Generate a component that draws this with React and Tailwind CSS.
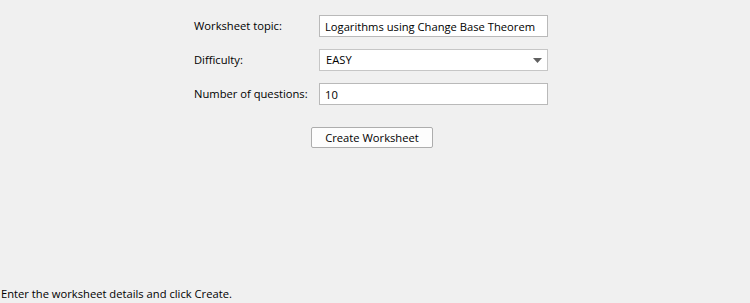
import { useState } from 'react';

const App = () => {
    const [topic, setTopic] = useState('Logarithms using Change Base Theorem');
    const [difficulty] = useState('EASY');
    const [count, setCount] = useState('10');

    return (
        <div className="h-screen w-full bg-[#f0f0f0] text-[11.2px] text-black flex flex-col font-['Open_Sans',sans-serif]">
            <div className="flex-1 pt-[15px]">
                {/* Form */}
                <div className="ml-[194px] grid grid-cols-[125px_229px] gap-y-[12px] items-center">
                    <label>Worksheet topic:</label>
                    <input
                        value={topic}
                        onChange={(e) => setTopic(e.target.value)}
                        className="h-[22px] bg-white border border-[#b9b9b9] px-[5px] outline-none"
                    />

                    <label>Difficulty:</label>
                    <div className="relative h-[22px] bg-white border border-[#c6c6c6] flex items-center px-[6px]">
                        <span>{difficulty}</span>
                        <svg className="absolute right-[5px] top-[8px]" width="9" height="5" viewBox="0 0 9 5">
                            <path d="M0 0 H9 L4.5 5 Z" fill="#606060" />
                        </svg>
                    </div>

                    <label>Number of questions:</label>
                    <input
                        value={count}
                        onChange={(e) => setCount(e.target.value)}
                        className="h-[22px] bg-white border border-[#b9b9b9] px-[5px] outline-none"
                    />
                </div>

                <button className="mt-[22px] ml-[311px] w-[122px] h-[21px] bg-[#fdfdfd] border border-[#adadad] rounded-[2px] leading-none">
                    Create Worksheet
                </button>
            </div>

            {/* Status bar */}
            <div className="pl-[1px] pb-[1px] leading-[16px]">Enter the worksheet details and click Create.</div>
        </div>
    );
};

export default App;
